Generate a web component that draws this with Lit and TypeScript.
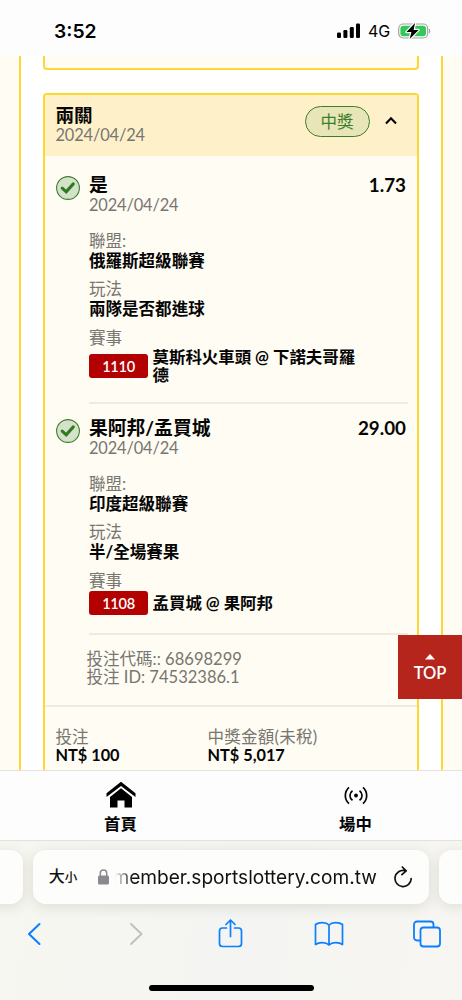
import { LitElement, html, css, svg } from "lit";
import { customElement, property } from "lit/decorators.js";

interface Leg {
  pick: string;
  date: string;
  odds: string;
  league: string;
  market: string;
  code: string;
  match: string;
}

const legs: Leg[] = [
  { pick: "是", date: "2024/04/24", odds: "1.73", league: "俄羅斯超級聯賽", market: "兩隊是否都進球", code: "1110", match: "莫斯科火車頭 @ 下諾夫哥羅德" },
  { pick: "果阿邦/孟買城", date: "2024/04/24", odds: "29.00", league: "印度超級聯賽", market: "半/全場賽果", code: "1108", match: "孟買城 @ 果阿邦" },
];

@customElement("status-bar")
class StatusBar extends LitElement {
  static styles = css`
    :host { display: flex; height: 56px; flex: none; background: #fdfdfd; color: #000; font-family: Inter, sans-serif; padding: 0 31px 0 54px; box-sizing: border-box; justify-content: space-between; }
    .time { font-size: 19.3px; font-weight: 600; line-height: 24px; margin-top: 19px; }
    .right { display: flex; align-items: center; height: 24px; margin-top: 19px; }
    .net { font-size: 16px; font-weight: 400; margin: 0 7px 0 7px; line-height: 24px; width: 23px; white-space: nowrap; }
    svg { display: block; }
  `;
  render() {
    return html`
      <div class="time">3:52</div>
      <div class="right">
        <svg width="24" height="16" viewBox="0 0 24 16">
          <rect x="0" y="9.5" width="4" height="5.5" rx="1.2" />
          <rect x="6.4" y="7" width="4" height="8" rx="1.2" />
          <rect x="12.8" y="4" width="4" height="11" rx="1.2" />
          <rect x="19" y="0.5" width="4" height="14.5" rx="1.2" />
        </svg>
        <div class="net">4G</div>
        <svg width="33" height="18" viewBox="0 0 33 18">
          <rect x="0.7" y="2" width="29" height="14" rx="4.5" fill="none" stroke="#a2a2a4" stroke-width="1.2" />
          <path d="M31 6.5c1.6.6 1.6 4.4 0 5z" fill="#a2a2a4" />
          <rect x="2.4" y="3.7" width="25.6" height="10.6" rx="3" fill="#34c759" />
          <path d="M17 1 8.4 10h5l-1.7 7 8.900-9h-5z" fill="#000" stroke="#fff" stroke-width="2.4" stroke-linejoin="round" paint-order="stroke" />
        </svg>
      </div>
    `;
  }
}

@customElement("bet-leg")
class BetLeg extends LitElement {
  @property({ attribute: false }) leg!: Leg;
  static styles = css`
    :host { display: flex; padding: 0 9px 0 11px; }
    .icon { flex: none; width: 24px; height: 24px; margin: 15px 9.5px 0 0; }
    .icon svg { display: block; }
    .body { flex: 1; border-bottom: 2px solid #eeebe4; padding-top: 14px; min-width: 0; }
    .head { display: flex; justify-content: space-between; padding-right: 2px; font-size: 18.8px; font-weight: 700; line-height: 20px; height: 20px; }
    .date { color: #777671; line-height: 20px; height: 18px; font-size: 16.4px; letter-spacing: -0.15px; }
    .fields { padding-top: 17.5px; }
    .label { color: #777671; line-height: 20px; height: 20px; }
    .value { font-weight: 700; line-height: 20px; height: 20px; margin-bottom: 8.5px; }
    .match { display: flex; align-items: center; gap: 4.5px; padding: 0.5px 0 18px; }
    .code { flex: none; width: 59px; height: 24px; border-radius: 3px; background: #b30000; color: #fff; font-size: 14.6px; letter-spacing: -0.3px; font-weight: 600; line-height: 25px; text-align: center; }
    .teams { font-weight: 700; line-height: 18px; width: 210px; word-break: break-all; font-size: 16.45px; }
  `;
  render() {
    const l = this.leg;
    return html`
      <div class="icon">
        <svg width="24" height="24" viewBox="0 0 24 24">
          <circle cx="12" cy="12" r="11.4" fill="#d5e2cb" stroke="#3c7f2b" stroke-width="1.1" />
          <path d="M6.2 12.100 10.200 15.800l7.100-7.900" fill="none" stroke="#327a20" stroke-width="3.100" stroke-linejoin="miter" stroke-linecap="round" />
        </svg>
      </div>
      <div class="body">
        <div class="head"><span>${l.pick}</span><span>${l.odds}</span></div>
        <div class="date">${l.date}</div>
        <div class="fields">
          <div class="label">聯盟:</div>
          <div class="value">${l.league}</div>
          <div class="label">玩法</div>
          <div class="value">${l.market}</div>
          <div class="label">賽事</div>
          <div class="match"><span class="code">${l.code}</span><span class="teams">${l.match}</span></div>
        </div>
      </div>
    `;
  }
}

@customElement("bet-slip")
class BetSlip extends LitElement {
  static styles = css`
    :host { display: flex; height: 714px; flex: none; overflow: hidden; position: relative; background: #fff; color: #050505; font: 16.55px/18px Lato, "Noto Sans CJK TC", sans-serif; }
    .side { flex: none; width: 21px; box-sizing: border-box; background: #fffcf3; }
    .left { border-right: 2px solid #ffd731; }
    .right { border-left: 2px solid #ffd731; }
    .list { flex: 1; padding: 0 22px 0 21.5px; display: flex; flex-direction: column; }
    .prev { flex: none; height: 13.5px; box-sizing: border-box; border: 2px solid #ffd731; border-top: 0; border-radius: 0 0 4px 4px; background: #fffcf3; }
    .card { flex: none; margin-top: 23.5px; border: 2px solid #ffd731; border-radius: 4px; background: #fffcf3; height: 800px; box-sizing: border-box; overflow: hidden; }
    .top { height: 61px; box-sizing: border-box; background: #fef1c9; display: flex; padding: 11px 20px 0 11px; align-items: flex-start; }
    .legs { padding-top: 5px; }
    .name { flex: 1; }
    .title { font-size: 18.6px; font-weight: 700; line-height: 19px; }
    .date { font-size: 16.4px; line-height: 19px; letter-spacing: -0.15px; }
    .muted { color: #777671; }
    .won { width: 65px; height: 31px; box-sizing: border-box; border: 1px solid #3c7f2b; border-radius: 16px; background: #e8e5b8; color: #3c7f2b; text-align: center; line-height: 30px; }
    .chev { margin: 10px 0 0 15.500px; display: block; }
    .ids { padding: 15px 0 19px 42px; border-bottom: 2px solid #eeebe4; }
    .sums { display: grid; grid-template-columns: 152px 1fr; padding: 20.500px 11px 0; }
    .won-label { letter-spacing: 0.25px; }
    .amount { font-weight: 700; font-size: 16.300px; }
    .totop { position: absolute; right: 0; top: 579px; width: 64px; height: 64px; background: #b5251b; color: #fff; text-align: center; font-size: 16.500px; font-weight: 600; line-height: 20px; }
    .totop svg { display: block; margin: 19px auto 3px; }
  `;
  render() {
    return html`
      <div class="side left"></div>
      <div class="list">
        <div class="prev"></div>
        <div class="card">
          <div class="top">
            <div class="name">
              <div class="title">兩關</div>
              <div class="muted date">2024/04/24</div>
            </div>
            <div class="won">中獎</div>
            <svg class="chev" width="12" height="9" viewBox="0 0 12 9"><path d="M1 7.5 6 2.2 11 7.5" fill="none" stroke="#000" stroke-width="2.100" /></svg>
          </div>
          <div class="legs">${legs.map((l) => html`<bet-leg .leg=${l}></bet-leg>`)}</div>
          <div class="ids muted">
            <div>投注代碼:: 68698299</div>
            <div>投注 ID: 74532386.1</div>
          </div>
          <div class="sums">
            <div><div class="muted">投注</div><div class="amount">NT$ 100</div></div>
            <div><div class="muted won-label">中獎金額(未稅)</div><div class="amount">NT$ 5,017</div></div>
          </div>
        </div>
      </div>
      <div class="side right"></div>
      <div class="totop">
        <svg width="10" height="6" viewBox="0 0 10 6"><path d="M0 5.5 5 0l5 5.5z" fill="#fff" /></svg>
        TOP
      </div>
    `;
  }
}

@customElement("tab-bar")
class TabBar extends LitElement {
  static styles = css`
    :host { display: flex; height: 71px; flex: none; box-sizing: border-box; border-top: 1px solid #e4e3e1; border-bottom: 1px solid #e2e1dd; background: #fdfdfd; padding: 0 0 0 3px; font: 700 16.4px/20px Lato, "Noto Sans CJK TC", sans-serif; color: #050505; }
    .tab { width: 235px; flex: none; display: flex; flex-direction: column; align-items: center; padding-top: 9px; box-sizing: border-box; }
    .glyph { height: 30px; display: flex; align-items: center; margin-bottom: 4px; }
  `;
  render() {
    return html`
      <div class="tab">
        <div class="glyph">
          <svg width="30" height="28" viewBox="0 0 30 28">
            <path d="M.5 12.2 15 .8l14.500 11.400v3.900L15 5 .5 16.100z" />
            <path d="M4 16 15 7.300 26 16v10.500h-7.500v-7h-7v7H4z" />
          </svg>
        </div>
        <div>首頁</div>
      </div>
      <div class="tab">
        <div class="glyph">
          <svg width="24" height="20" viewBox="0 0 24 20" fill="none" stroke="#050505" stroke-width="1.700">
            <circle cx="12" cy="10.500" r="1.900" fill="#050505" stroke="none" />
            <path d="M8.500 5.700a5.800 5.800 0 0 0 0 9.600M15.500 5.700a5.800 5.800 0 0 1 0 9.600M5 2.300a11 11 0 0 0 0 16.400M19 2.300a11 11 0 0 1 0 16.400" />
          </svg>
        </div>
        <div>場中</div>
      </div>
    `;
  }
}

@customElement("browser-bar")
class BrowserBar extends LitElement {
  static styles = css`
    :host { display: flex; flex-direction: column; height: 159px; flex: none; overflow: hidden; background: linear-gradient(100deg, #f7f7f1, #f4f4f2 50%, #f7f6f2); font-family: Inter, "Noto Sans CJK TC", sans-serif; }
    .bars { display: flex; gap: 10px; height: 54px; margin: 9px -12px 0; flex: none; }
    .pill { background: #fdfdfc; border-radius: 12.500px; box-shadow: 0 3px 14px rgba(60, 60, 30, 0.13); }
    .edge { width: 35.200px; flex: none; }
    .main { flex: 1; display: flex; align-items: center; padding: 0 16px 0 15.500px; color: #111; }
    .size { font-size: 16px; line-height: 20px; font-weight: 500; white-space: nowrap; width: 49px; flex: none; }
    .size small { font-size: 12.500px; }
    .url { font-size: 19.100px; line-height: 28px; flex: 1; display: flex; justify-content: flex-end; white-space: nowrap; mask-image: linear-gradient(90deg, transparent 6px, #000 24px); }
    .reload { margin-left: 16px; }
    .tools { display: flex; justify-content: space-between; align-items: center; height: 34px; margin: 13px 21px 0 26px; color: #0a7fff; }
    .tools svg, .main svg { display: block; flex: none; }
    .tools .forward { margin-left: 14px; }
    .home { width: 165px; height: 6px; border-radius: 3px; background: #000; margin: 34px 0 0 149px; flex: none; }
  `;
  render() {
    return html`
      <div class="bars">
        <div class="pill edge"></div>
        <div class="pill main">
          <div class="size">大<small>小</small></div>
          <svg width="11" height="16" viewBox="0 0 11 16"><path d="M2.300 7V4.200a3.200 3.200 0 0 1 6.400 0V7" fill="none" stroke="#8a8a8e" stroke-width="1.500" /><rect x="0" y="6.500" width="11" height="9" rx="1.500" fill="#8a8a8e" /></svg>
          <div class="url"><span>member.sportslottery.com.tw</span></div>
          <svg class="reload" width="20" height="22" viewBox="0 0 20 22" fill="none" stroke="#111" stroke-width="1.700" stroke-linecap="round" stroke-linejoin="round">
            <path d="M12 4.600A8.100 8.100 0 1 0 18.200 12.500M9.300 1 13.200 4.800 8.900 8.600" />
          </svg>
        </div>
        <div class="pill edge"></div>
      </div>
      <div class="tools">
        <svg width="16" height="24" viewBox="0 0 16 24"><path d="M13.500 2 3 12l10.500 10" fill="none" stroke="currentColor" stroke-width="2" stroke-linecap="round" stroke-linejoin="round" /></svg>
        <svg class="forward" width="16" height="24" viewBox="0 0 16 24"><path d="M3 2l10.500 10L3 22" fill="none" stroke="#bfbfbd" stroke-width="1.900" stroke-linecap="round" stroke-linejoin="round" /></svg>
        <svg width="24" height="30" viewBox="-2.500 0.500 24 30" overflow="visible" fill="none" stroke="currentColor" stroke-width="1.700" stroke-linecap="round" stroke-linejoin="round"><path d="M8 9.500H4A3 3 0 0 0 1 12.500V25a3 3 0 0 0 3 3h16a3 3 0 0 0 3-3V12.500a3 3 0 0 0-3-3h-4M12 18V1.500M7.500 6 12 1.500 16.500 6" /></svg>
        <svg width="30" height="26" viewBox="-3 0 30 26" overflow="visible" fill="none" stroke="currentColor" stroke-width="1.700" stroke-linecap="round" stroke-linejoin="round"><path d="M15 4C12 .8 5 .8 1.500 3.500v20C5 20.800 12 20.800 15 24c3-3.200 10-3.200 13.500-.5v-20C25 .8 18 .8 15 4zM15 4v20" /></svg>
        <svg width="28" height="28" viewBox="0 0 28 28" fill="none" stroke="currentColor" stroke-width="1.800" stroke-linejoin="round"><rect x="7.500" y="7.500" width="19.500" height="19" rx="3" /><path d="M7.500 20.500H4a3 3 0 0 1-3-3V4.500a3 3 0 0 1 3-3h13.500a3 3 0 0 1 3 3v3" /></svg>
      </div>
      <div class="home"></div>
    `;
  }
}

@customElement("app-root")
class AppRoot extends LitElement {
  static styles = css`
    :host { display: flex; flex-direction: column; width: 462px; height: 1000px; overflow: hidden; background: #fff; }
  `;
  render() {
    return html`<status-bar></status-bar><bet-slip></bet-slip><tab-bar></tab-bar><browser-bar></browser-bar>`;
  }
}
